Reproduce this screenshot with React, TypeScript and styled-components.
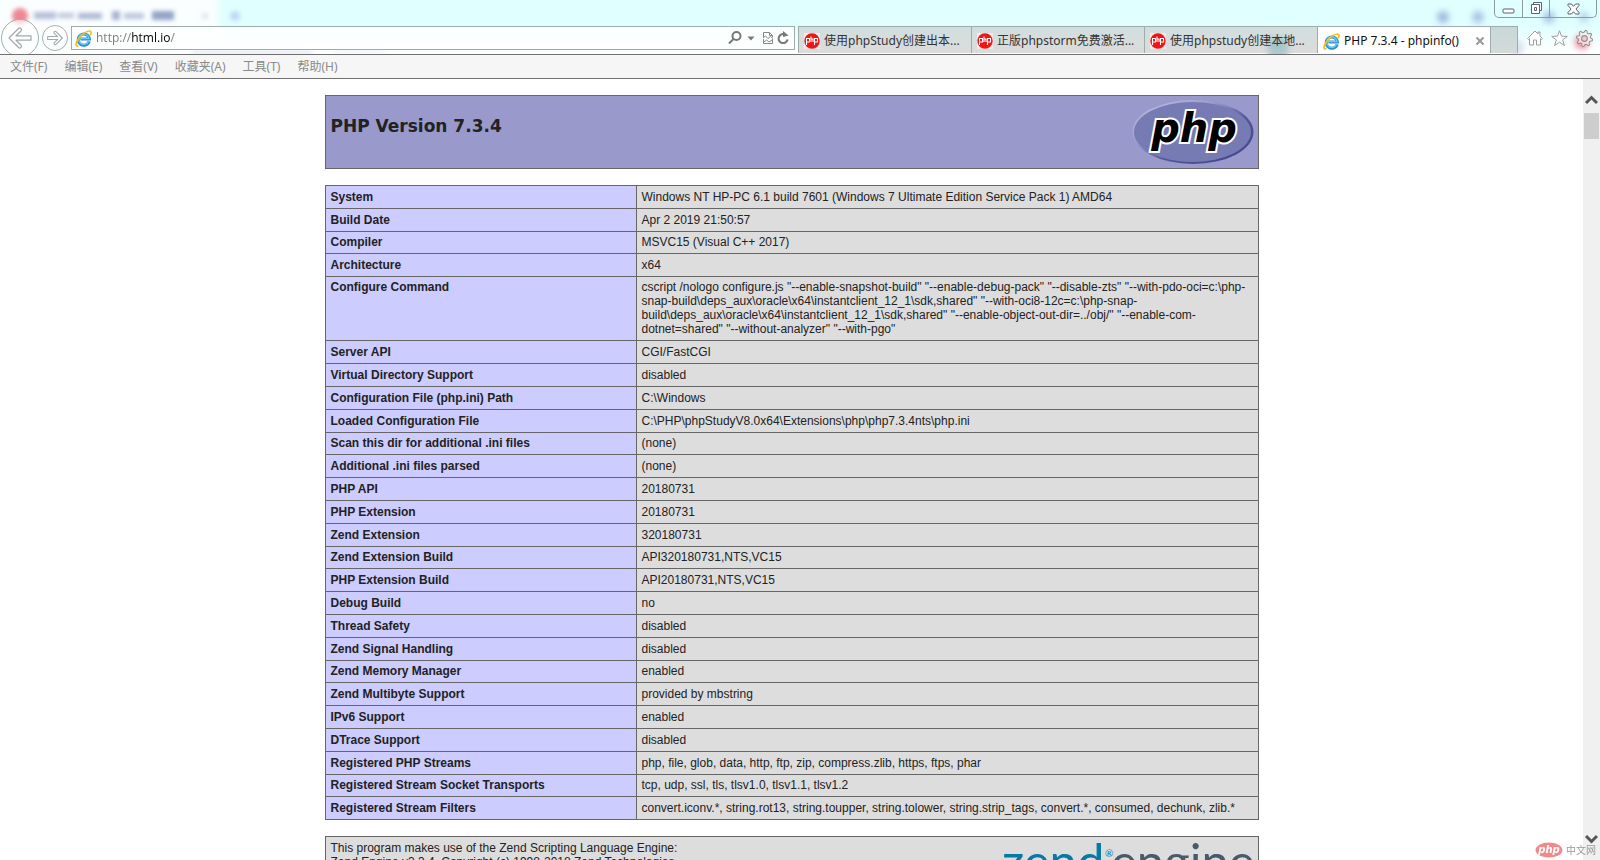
import React from 'react';
import styled, { createGlobalStyle } from 'styled-components';

const uiFont = '"Noto Sans", "Noto Sans CJK SC", sans-serif';
const pageFont = '"Liberation Sans", Arial, sans-serif';

const GlobalStyle = createGlobalStyle`
  * { box-sizing: border-box; }
  body { margin: 0; background: #fff; color: #222; }
  button { border: 0; padding: 0; background: none; font: inherit; color: inherit; }
`;

const Window = styled.div`
  display: flex;
  flex-direction: column;
  height: 100vh;
  overflow: hidden;
`;

const Chrome = styled.header`
  position: relative;
  flex: none;
  display: flex;
  flex-direction: column;
  height: 54px;
  overflow: hidden;
  background: linear-gradient(#e0ffff, #e0ffff 26px, #f2ffff 40px, #fff 54px);
  font: 12px/16px ${uiFont};
`;

const Glass = styled.svg`
  position: absolute;
  top: 0;
  width: 100%;
  height: 100%;
`;

const GlassLeft = styled(Glass)` left: 0; `;
const GlassRight = styled(Glass)`
  right: 0;
  width: 400px;
`;

const TitleBar = styled.div`
  display: flex;
  justify-content: flex-end;
  align-items: flex-start;
  height: 26px;
  padding-right: 3px;
`;

const WindowControls = styled.div`
  position: relative;
  display: flex;
  height: 18px;
  border: 1px solid #8b9b9e;
  border-top: 0;
  border-radius: 0 0 5px 5px;
`;

const ControlButton = styled.button<{ $wide?: boolean }>`
  display: flex;
  align-items: center;
  justify-content: center;
  width: ${(p) => (p.$wide ? 47 : 27)}px;
  height: 17px;
  & + & { border-left: 1px solid #8b9b9e; }
`;

const NavRow = styled.nav`
  position: relative;
  display: flex;
  align-items: flex-start;
  height: 28px;
`;

const Navigation = styled.div`
  flex: 1;
  min-width: 0;
  display: flex;
  align-items: center;
  height: 24px;
  padding-left: 1px;
  margin-right: 3px;
`;

const RoundButton = styled.button<{ $size: number }>`
  flex: none;
  display: flex;
  align-items: center;
  justify-content: center;
  width: ${(p) => p.$size}px;
  height: ${(p) => p.$size}px;
  margin-right: 3px;
  border: 1px solid #a9adad;
  border-radius: 50%;
  background: rgba(255, 255, 255, 0.6);
`;

const AddressBar = styled.div`
  flex: 1;
  min-width: 0;
  display: flex;
  align-items: center;
  gap: 4px;
  height: 24px;
  padding: 0 4px 0 3px;
  border: 1px solid #a0acac;
  background: rgba(255, 255, 255, 0.8);
`;

const Address = styled.input`
  flex: 1;
  min-width: 0;
  height: 20px;
  padding: 0;
  border: 0;
  outline: 0;
  font: 12px/20px "Open Sans", "Noto Sans", sans-serif;
  color: transparent;
  background: linear-gradient(90deg, #777 35px, #000 35px, #000 74px, #777 74px);
  background-clip: text;
`;

const AddressTools = styled.div`
  display: flex;
  align-items: center;
  gap: 2px;
`;

const IconButton = styled.button`
  flex: none;
  display: flex;
`;

const Tabs = styled.div`
  display: flex;
  height: 27px;
  border-right: 1px solid #a0acac;
`;

const Tab = styled.div<{ $active?: boolean }>`
  display: flex;
  align-items: center;
  gap: 4px;
  width: 173px;
  padding: 2px 5px 0;
  border: 1px solid #a0acac;
  border-width: 1px 0 0 1px;
  background: ${(p) => (p.$active ? '#fff' : 'linear-gradient(rgba(190, 190, 190, 0.5), rgba(200, 200, 200, 0.65))')};
  color: ${(p) => (p.$active ? '#111' : '#333')};
`;

const TabTitle = styled.button`
  flex: 1;
  text-align: left;
  white-space: nowrap;
`;

const NewTab = styled.button`
  width: 27px;
  border: 1px solid #a0acac;
  border-width: 1px 0 0 1px;
  background: linear-gradient(#c8d8d8, #d4dada);
`;

const BrowserTools = styled.div`
  display: flex;
  align-items: center;
  gap: 8px;
  height: 24px;
  padding: 0 7px 0 9px;
`;

const MenuBar = styled.div`
  flex: none;
  display: flex;
  gap: 17px;
  height: 25px;
  padding: 0 10px;
  border: 1px solid #707070;
  border-width: 1px 0;
  background: #f6f6f6;
  color: #8a8a8a;
  font: 12px/22px ${uiFont};
`;

const Viewport = styled.div`
  flex: 1;
  min-height: 0;
  display: flex;
`;

const Page = styled.main`
  flex: 1;
  min-width: 0;
  overflow: hidden;
  padding-top: 16px;
  font: 12px/14px ${pageFont};
`;

const Center = styled.div`
  width: 934px;
  max-width: 100%;
  margin: 0 auto;
  display: flex;
  flex-direction: column;
  gap: 16px;
`;

const Banner = styled.div`
  display: flex;
  justify-content: space-between;
  align-items: flex-start;
  height: 74px;
  padding: 3px 4px 3px 5px;
  border: 1px solid #666;
  background: #9999cc;
`;

const Title = styled.h1`
  margin: 15px 0 0;
  font: bold 17px/24px "DejaVu Sans", ${pageFont};
`;

const InfoTable = styled.table`
  width: 100%;
  border-collapse: collapse;
  table-layout: fixed;
`;

const Row = styled.tr`
  & > * { padding: 4px 5px; }
  &:nth-child(3) > *, &:nth-child(5n) > * { padding-top: 3px; }
`;

const Key = styled.th`
  width: 311px;
  border: 1px solid #666;
  background: #ccccff;
  text-align: left;
  vertical-align: baseline;
`;

const Value = styled.td`
  border: 1px solid #666;
  background: #ddd;
  vertical-align: baseline;
  overflow-wrap: break-word;
`;

const EngineBox = styled.section`
  display: flex;
  justify-content: space-between;
  align-items: flex-start;
  padding: 4px 5px;
  border: 1px solid #666;
  background: #ddd;
`;

const Paragraph = styled.p`
  margin: 0;
`;

const ScrollBar = styled.div`
  position: relative;
  flex: none;
  display: flex;
  flex-direction: column;
  align-items: center;
  width: 17px;
  padding: 16px 0;
  background: #f0f0f0;
`;

const Thumb = styled.div`
  width: 15px;
  height: 26px;
  margin: 8px 0 auto;
  background: #cdcdcd;
`;

const Watermark = styled.svg`
  position: fixed;
  right: 4px;
  bottom: 0;
`;

const rows: [string, string][] = [
  ['System', 'Windows NT HP-PC 6.1 build 7601 (Windows 7 Ultimate Edition Service Pack 1) AMD64'],
  ['Build Date', 'Apr 2 2019 21:50:57'],
  ['Compiler', 'MSVC15 (Visual C++ 2017)'],
  ['Architecture', 'x64'],
  [
    'Configure Command',
    'cscript /nologo configure.js "--enable-snapshot-build" "--enable-debug-pack" "--disable-zts" "--with-pdo-oci=c:\\php-snap-build\\deps_aux\\oracle\\x64\\instantclient_12_1\\sdk,shared" "--with-oci8-12c=c:\\php-snap-build\\deps_aux\\oracle\\x64\\instantclient_12_1\\sdk,shared" "--enable-object-out-dir=../obj/" "--enable-com-dotnet=shared" "--without-analyzer" "--with-pgo"',
  ],
  ['Server API', 'CGI/FastCGI'],
  ['Virtual Directory Support', 'disabled'],
  ['Configuration File (php.ini) Path', 'C:\\Windows'],
  ['Loaded Configuration File', 'C:\\PHP\\phpStudyV8.0x64\\Extensions\\php\\php7.3.4nts\\php.ini'],
  ['Scan this dir for additional .ini files', '(none)'],
  ['Additional .ini files parsed', '(none)'],
  ['PHP API', '20180731'],
  ['PHP Extension', '20180731'],
  ['Zend Extension', '320180731'],
  ['Zend Extension Build', 'API320180731,NTS,VC15'],
  ['PHP Extension Build', 'API20180731,NTS,VC15'],
  ['Debug Build', 'no'],
  ['Thread Safety', 'disabled'],
  ['Zend Signal Handling', 'disabled'],
  ['Zend Memory Manager', 'enabled'],
  ['Zend Multibyte Support', 'provided by mbstring'],
  ['IPv6 Support', 'enabled'],
  ['DTrace Support', 'disabled'],
  ['Registered PHP Streams', 'php, file, glob, data, http, ftp, zip, compress.zlib, https, ftps, phar'],
  ['Registered Stream Socket Transports', 'tcp, udp, ssl, tls, tlsv1.0, tlsv1.1, tlsv1.2'],
  [
    'Registered Stream Filters',
    'convert.iconv.*, string.rot13, string.toupper, string.tolower, string.strip_tags, convert.*, consumed, dechunk, zlib.*',
  ],
];

const menus = ['文件(F)', '编辑(E)', '查看(V)', '收藏夹(A)', '工具(T)', '帮助(H)'];
const tabs = ['使用phpStudy创建出本...', '正版phpstorm免费激活...', '使用phpstudy创建本地...'];

const IeIcon = () => (
  <svg width="17" height="17" viewBox="0 0 17 17" fill="none" aria-hidden="true">
    <path d="M14.2 11.3A5.6 5.6 0 1 1 14.4 9H5.4" stroke="#2a8fd0" strokeWidth="3" />
    <path d="M13.6 11.2A5.2 5.2 0 1 1 14 8.6H6" stroke="#6cc8f4" strokeWidth="1.4" />
    <path d="M3.4 15.6C.2 17 .2 13.4 3 9.4 6.2 4.7 11.600.7 14.700 1c1.900.3 1.500 2.600.6 4.400" stroke="#f5bd1a" strokeWidth="1.700" />
  </svg>
);

const PhpBadge = () => (
  <svg width="16" height="16" viewBox="0 0 16 16" aria-hidden="true">
    <rect width="16" height="16" fill="#f7e9e9" />
    <circle cx="8" cy="8" r="7.700" fill="#f01414" />
    <path d="M2.500 12V5.500h3v3.500h-3M7 3.500V9M7 6h2v3M10.500 12V5.500h3v3.500h-3" fill="none" stroke="#fff" strokeWidth="1.100" />
  </svg>
);

const Arrow = ({ flip, size }: { flip?: boolean; size: number }) => (
  <svg width={size} height={size} viewBox="0 0 24 24" fill="#fff" stroke="#a4a8a8" strokeWidth={flip ? 1.6 : 1.2} strokeLinejoin="round" aria-hidden="true">
    <path transform={flip ? 'matrix(-1 0 0 1 24 0)' : undefined} d="M1 12 10.500 2.500c1.500-1.500 4 .8 2.500 2.500L8 9.800h15v4.400H8l5 4.800c1.500 1.700-1 4-2.500 2.500Z" />
  </svg>
);

const gearPoints = Array.from({ length: 32 }, (_, i) => {
  const r = i % 4 < 2 ? 7.6 : 5.6;
  const a = ((i + 0.5) / 32) * Math.PI * 2;
  return `${(8 + r * Math.cos(a)).toFixed(2)},${(8 + r * Math.sin(a)).toFixed(2)}`;
}).join(' ');

const PhpLogo = () => (
  <svg width="122" height="66" viewBox="0 0 122 66" role="img" aria-label="PHP logo">
    <defs>
      <linearGradient id="rim" x1="0" y1="0" x2="1" y2="1">
        <stop offset="0" stopColor="#c4c6e8" />
        <stop offset=".35" stopColor="#9a9ccc" />
        <stop offset=".6" stopColor="#54569a" />
        <stop offset="1" stopColor="#41438a" />
      </linearGradient>
    </defs>
    <ellipse cx="61" cy="33" rx="60.500" ry="32" fill="url(#rim)" />
    <ellipse cx="60.500" cy="33" rx="58.500" ry="30" fill="#777bb3" />
    <g fontFamily="DejaVu Sans" fontWeight="bold" fontStyle="italic" fontSize="40" textAnchor="middle">
      <text x="62" y="43" fill="#000" stroke="#fff" strokeWidth="4" paintOrder="stroke">php</text>
    </g>
  </svg>
);

const ZendLogo = () => (
  <svg width="256" height="62" viewBox="0 0 256 62" role="img" aria-label="Zend Engine">
    <g fontFamily="Lato" fontSize="49">
      <text x="5" y="38" fill="#0679a5">zend</text>
      <text x="114" y="38" fill="#4a5a68">engine</text>
      <text x="108" y="16" fontSize="10" fill="#0679a5">®</text>
    </g>
  </svg>
);

const Chevron = ({ down }: { down?: boolean }) => (
  <svg width="13" height="10" viewBox="0 0 13 10" fill="none" stroke="#555" strokeWidth="3" aria-hidden="true">
    <path d={down ? 'M1 2l5.500 5.500L12 2' : 'M1 8l5.500-5.500L12 8'} />
  </svg>
);

export default function App() {
  return (
    <Window>
      <GlobalStyle />
      <Chrome>
        <GlassLeft aria-hidden="true">
          <defs>
            <filter id="haze" x="-50%" y="-50%" width="200%" height="200%"><feGaussianBlur stdDeviation="3" /></filter>
            <filter id="soft" x="-50%" y="-50%" width="200%" height="200%"><feGaussianBlur stdDeviation="2" /></filter>
          </defs>
          <rect x="-20" y="-10" width="238" height="48" fill="#fafeff" filter="url(#haze)" />
          <circle cx="20" cy="16" r="8" fill="#ee8795" filter="url(#soft)" />
          <g fill="#5e72a8" filter="url(#soft)">
            <rect x="34" y="12" width="22" height="7" opacity=".45" />
            <rect x="58" y="13" width="16" height="5" opacity=".4" />
            <rect x="78" y="13" width="24" height="6" opacity=".5" />
            <rect x="112" y="11" width="8" height="9" opacity=".55" />
            <rect x="124" y="13" width="20" height="6" opacity=".4" />
            <rect x="152" y="11" width="22" height="9" opacity=".65" />
            <circle cx="205" cy="16" r="3" opacity=".2" />
            <circle cx="235" cy="16" r="5" fill="#8e9ee8" opacity=".4" />
            <rect x="192" y="51" width="120" height="3" opacity=".2" />
            <rect x="335" y="50" width="50" height="3" opacity=".1" />
          </g>
        </GlassLeft>
        <GlassRight aria-hidden="true">
          <g fill="#7088c4" filter="url(#haze)">
            <circle cx="243" cy="17" r="6" opacity=".6" />
            <circle cx="278" cy="17" r="6" opacity=".5" />
            <circle cx="349" cy="17" r="6" opacity=".5" />
            <circle cx="384" cy="17" r="5" opacity=".4" />
            <circle cx="382" cy="42" r="7" fill="#f0647c" opacity=".8" />
            <circle cx="316" cy="48" r="8" opacity=".25" />
            <rect x="68" y="38" width="20" height="18" fill="#58b4c8" opacity=".8" />
          </g>
        </GlassRight>
        <TitleBar>
          <WindowControls>
            <ControlButton aria-label="Minimize">
              <svg width="13" height="13" viewBox="0 0 13 13"><rect x="1" y="7" width="11" height="4" rx="1" fill="#fff" stroke="#5b6172" /></svg>
            </ControlButton>
            <ControlButton aria-label="Restore">
              <svg width="13" height="13" viewBox="0 0 13 13" fill="#fff" stroke="#5b6172"><path d="M3.500.5h8v8h-8z" /><path d="M1.500 2.500h8v9h-8z" /><path d="M4.500 5.500h2v3h-2z" /></svg>
            </ControlButton>
            <ControlButton $wide aria-label="Close">
              <svg width="13" height="12" viewBox="0 0 13 12" fill="#fff" stroke="#5b6172"><path d="M1 1h3.500l2 2.300L8.500 1H12v1.500L9 6l3 3.500V11H8.500l-2-2.300L4.500 11H1V9.500L4 6 1 2.500z" /></svg>
            </ControlButton>
          </WindowControls>
        </TitleBar>
        <NavRow>
          <Navigation>
            <RoundButton $size={38} aria-label="Back"><Arrow size={24} /></RoundButton>
            <RoundButton $size={26} aria-label="Forward"><Arrow size={16} flip /></RoundButton>
            <AddressBar>
              <IeIcon />
              <Address aria-label="Address" defaultValue="http://html.io/" />
              <AddressTools>
                <IconButton aria-label="Search">
                  <svg width="14" height="14" viewBox="0 0 14 14" fill="none" stroke="#777" strokeWidth="2"><circle cx="8.500" cy="5" r="4" /><path d="M5.500 8 1 12.500" /></svg>
                </IconButton>
                <IconButton aria-label="Search options">
                  <svg width="16" height="14" viewBox="0 0 16 14"><path d="M3.500 5.500h7L7 9.500z" fill="#777" /></svg>
                </IconButton>
                <IconButton aria-label="Compatibility view">
                  <svg width="12" height="14" viewBox="0 0 12 14" fill="none" stroke="#888"><path d="M1.500 6V1.500h6l3 3V6M7.500 1.500v3h3M1.500 8v4.500h9V8M1 7l2.500-2L6 7.500 8.500 5.500 11 7.500M2 11l2.500-2L7 11l3-2" /></svg>
                </IconButton>
                <IconButton aria-label="Refresh">
                  <svg width="14" height="14" viewBox="0 0 14 14" fill="none" stroke="#777" strokeWidth="2"><path d="M11.500 8.500A4.500 4.500 0 1 1 8 3.200" /><path d="M7 0v6l5.500-1.500z" fill="#777" stroke="none" /></svg>
                </IconButton>
              </AddressTools>
            </AddressBar>
          </Navigation>
          <Tabs>
            {tabs.map((t) => (
              <Tab key={t}>
                <PhpBadge />
                <TabTitle>{t}</TabTitle>
              </Tab>
            ))}
            <Tab $active>
              <IeIcon />
              <TabTitle>PHP 7.3.4 - phpinfo()</TabTitle>
              <IconButton aria-label="Close tab">
                <svg width="10" height="10" viewBox="0 0 10 10" stroke="#999" strokeWidth="2"><path d="M1.500 1.500l7 7M8.500 1.500l-7 7" /></svg>
              </IconButton>
            </Tab>
            <NewTab aria-label="New tab" />
          </Tabs>
          <BrowserTools>
            <IconButton aria-label="Home">
              <svg width="16" height="16" viewBox="0 0 16 16" fill="#fff" stroke="#9a9e9e" strokeLinejoin="round"><path d="M.5 8.500 8 1l3 3V2h2v4l2.500 2.500-1 1-1-1v6.500h-4v-5h-3v5h-4V8.500l-1 1z" /></svg>
            </IconButton>
            <IconButton aria-label="Favorites">
              <svg width="17" height="17" viewBox="0 0 17 17" fill="#fff" stroke="#9a9e9e" strokeLinejoin="round"><path d="m8.500.8 2 5.400 5.800.2-4.600 3.500 1.700 5.600-4.900-3.300-4.900 3.300 1.700-5.600L.7 6.400l5.800-.2z" /></svg>
            </IconButton>
            <IconButton aria-label="Tools">
              <svg width="17" height="17" viewBox="0 0 16 16" fill="none" stroke="#8c9090" strokeLinejoin="round"><polygon points={gearPoints} fill="#fff" fillOpacity=".6" /><circle cx="8" cy="8" r="2.700" fill="#f3c6d0" /></svg>
            </IconButton>
          </BrowserTools>
        </NavRow>
      </Chrome>
      <MenuBar>
        {menus.map((m) => <button key={m}>{m}</button>)}
      </MenuBar>
      <Viewport>
        <Page>
          <Center>
            <Banner>
              <Title>PHP Version 7.3.4</Title>
              <PhpLogo />
            </Banner>
            <InfoTable>
              <tbody>
                {rows.map(([name, value]) => (
                  <Row key={name}>
                    <Key scope="row">{name}</Key>
                    <Value>{value}</Value>
                  </Row>
                ))}
              </tbody>
            </InfoTable>
            <EngineBox>
              <Paragraph>
                This program makes use of the Zend Scripting Language Engine:
                <br />
                Zend Engine v3.3.4, Copyright (c) 1998-2018 Zend Technologies
              </Paragraph>
              <ZendLogo />
            </EngineBox>
          </Center>
        </Page>
        <ScrollBar>
          <Chevron />
          <Thumb />
          <Chevron down />
        </ScrollBar>
      </Viewport>
      <Watermark width="61" height="20" viewBox="0 0 61 20" role="img" aria-label="php中文网">
        <ellipse cx="14" cy="10" rx="13.500" ry="7.500" fill="#f08a8a" />
        <text x="14" y="13" textAnchor="middle" fontFamily="DejaVu Sans" fontStyle="italic" fontWeight="bold" fontSize="10" fill="#fff">php</text>
        <text x="31" y="14" fontFamily="Noto Sans CJK SC" fontSize="10" fill="#999">中文网</text>
      </Watermark>
    </Window>
  );
}
